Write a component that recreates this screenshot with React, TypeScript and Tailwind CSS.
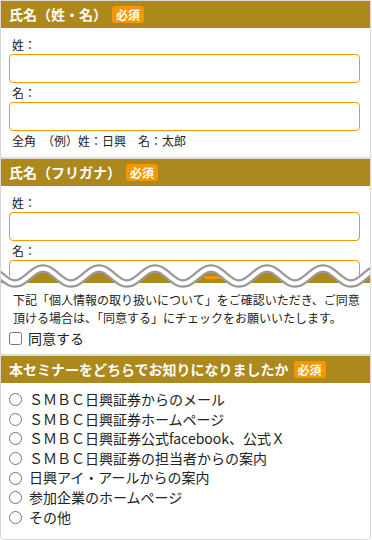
import React from 'react'

const GOLD = '#ad891d'

function Badge() {
  return (
    <span className="ml-[5px] inline-flex h-[17px] items-center rounded-[3px] bg-[#f39800] px-[4px] text-[12px] font-bold leading-none text-white">
      必須
    </span>
  )
}

function Header({ title }: { title: string }) {
  return (
    <div className="flex h-[27px] items-center bg-[#ad891d] pl-[8px] text-[14px] font-bold leading-[27px] text-white">
      <span>{title}</span>
      <Badge />
    </div>
  )
}

function Field({ label, first }: { label: string; first?: boolean }) {
  return (
    <>
      <p className={`${first ? '' : 'mt-[1px]'} pl-[3px] text-[12px] leading-[18px]`}>{label}</p>
      <div className="h-[29px] w-[351px] rounded-[4px] border border-[#f39800] bg-white" />
    </>
  )
}

const sources = [
  'ＳＭＢＣ日興証券からのメール',
  'ＳＭＢＣ日興証券ホームページ',
  'ＳＭＢＣ日興証券公式facebook、公式Ｘ',
  'ＳＭＢＣ日興証券の担当者からの案内',
  '日興アイ・アールからの案内',
  '参加企業のホームページ',
  'その他',
]

// torn-paper wave between the two cropped parts of the form
function Wave() {
  const c = 15
  const amp = 7.5
  const pts: string[] = []
  for (let x = -6; x <= 380; x += 2) {
    const y = c - amp * Math.cos((2 * Math.PI * (x - 42)) / 56)
    pts.push(`${x},${y.toFixed(2)}`)
  }
  const line = 'M' + pts.join(' L')
  const area = `${line} L380,${c} L-6,${c} Z`
  return (
    <svg className="absolute left-0 top-[260px] h-[30px] w-[371px]" viewBox="0 0 371 30">
      <defs>
        <clipPath id="below">
          <rect x="-10" y={c} width="400" height="20" />
        </clipPath>
        <clipPath id="above">
          <rect x="-10" y="-10" width="400" height={c + 10} />
        </clipPath>
      </defs>
      <path d={area} fill="#ffffff" clipPath="url(#below)" />
      <path d={area} fill={GOLD} clipPath="url(#above)" />
      <path d={line} fill="none" stroke="#9a9a9a" strokeWidth="8.5" />
      <path d={line} fill="none" stroke="#ffffff" strokeWidth="4" />
    </svg>
  )
}

export default function App() {
  return (
    <div className="h-[540px] w-[372px] overflow-hidden bg-white font-['Noto_Sans_CJK_JP',sans-serif] text-[#222]">
      <div className="relative h-[540px] w-[371px] overflow-hidden rounded-b-[4px] border border-[#d8d8d8]">
        <Header title="氏名（姓・名）" />
        <div className="px-[8px] pb-[7px] pt-[8px]">
          <Field label="姓：" first />
          <Field label="名：" />
          <p className="mt-[1px] pl-[3px] text-[12px] leading-[18px]">全角　（例）姓：日興　名：太郎</p>
        </div>
        <div className="h-[2px] bg-[#dcdcdc]" />

        <div className="h-[117px] overflow-hidden">
          <Header title="氏名（フリガナ）" />
          <div className="px-[8px] pt-[8px]">
            <Field label="姓：" first />
            <Field label="名：" />
          </div>
        </div>

        {/* bottom edge of the next header, seen below the tear */}
        <div className="h-[7px] bg-[#ad891d] pl-[203px]">
          <div className="h-[3px] w-[24px] rounded-b-[3px] bg-[#f39800]" />
        </div>
        <div className="pb-[6px] pl-[12px] pr-[8px] pt-[8px]">
          <p className="whitespace-nowrap text-[12px] leading-[18px]">
            下記「個人情報の取り扱いについて」をご確認いただき、ご同意
            <br />
            頂ける場合は、「同意する」にチェックをお願いいたします。
          </p>
          <label className="-ml-[4px] mt-[1px] flex h-[20px] items-center gap-[6px] text-[14px]">
            <input type="checkbox" className="h-[13px] w-[13px]" />
            <span>同意する</span>
          </label>
        </div>
        <div className="h-[2px] bg-[#dcdcdc]" />

        <Header title="本セミナーをどちらでお知りになりましたか" />
        <ul className="px-[8px] pt-[7px]">
          {sources.map((s) => (
            <li key={s}>
              <label className="flex h-[19.6px] items-center gap-[7px] text-[14px] leading-[19.6px]">
                <input type="radio" name="source" className="h-[13px] w-[13px]" />
                <span>{s}</span>
              </label>
            </li>
          ))}
        </ul>

        <Wave />
      </div>
    </div>
  )
}
